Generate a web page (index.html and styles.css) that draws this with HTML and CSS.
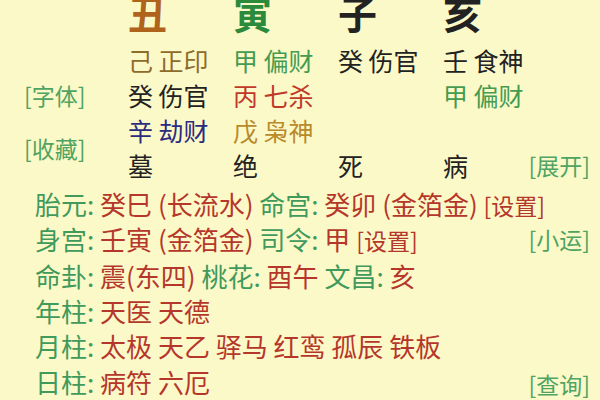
FILE: index.html
```html
<!DOCTYPE html>
<html lang="zh">
<head>
<meta charset="utf-8">
<link rel="stylesheet" href="styles.css">
</head>
<body>
<div class="page">
  <div class="chart">
    <div class="big c-brown col1 r1">丑</div>
    <div class="big c-green2 col2 r1">寅</div>
    <div class="big c-dark col3 r1">子</div>
    <div class="big c-dark col4 r1">亥</div>

    <div class="cell c-olive col1 r2">己 正印</div>
    <div class="cell c-green col2 r2">甲 偏财</div>
    <div class="cell c-dark col3 r2">癸 伤官</div>
    <div class="cell c-dark col4 r2">壬 食神</div>

    <div class="link side r3">[字体]</div>
    <div class="cell c-dark col1 r3">癸 伤官</div>
    <div class="cell c-red col2 r3">丙 七杀</div>
    <div class="cell c-green col4 r3">甲 偏财</div>

    <div class="cell c-navy col1 r4">辛 劫财</div>
    <div class="cell c-gold col2 r4">戊 枭神</div>
    <div class="link side r45">[收藏]</div>

    <div class="cell c-dark col1 r5">墓</div>
    <div class="cell c-dark col2 r5">绝</div>
    <div class="cell c-dark col3 r5">死</div>
    <div class="cell c-dark col4 r5">病</div>
    <div class="link right r5">[展开]</div>
  </div>

  <div class="info">
    <div class="row">
      <div class="line"><span class="k">胎元:</span> <span class="v">癸巳 (长流水)</span> <span class="k">命宫:</span> <span class="v">癸卯 (金箔金)</span> <span class="v btn">[设置]</span></div>
    </div>
    <div class="row">
      <div class="line"><span class="k">身宫:</span> <span class="v">壬寅 (金箔金)</span> <span class="k">司令:</span> <span class="v">甲</span> <span class="v btn">[设置]</span></div>
      <span class="link">[小运]</span>
    </div>
    <div class="row">
      <div class="line"><span class="k">命卦:</span> <span class="v">震(东四)</span> <span class="k">桃花:</span> <span class="v">酉午</span> <span class="k">文昌:</span> <span class="v">亥</span></div>
    </div>
    <div class="row">
      <div class="line"><span class="k">年柱:</span> <span class="v">天医 天德</span></div>
    </div>
    <div class="row">
      <div class="line"><span class="k">月柱:</span> <span class="v">太极 天乙 驿马 红鸾 孤辰 铁板</span></div>
    </div>
    <div class="row">
      <div class="line"><span class="k">日柱:</span> <span class="v">病符 六厄</span></div>
      <span class="link low">[查询]</span>
    </div>
  </div>
</div>
</body>
</html>
```

FILE: styles.css
```css
html, body {
  margin: 0;
  padding: 0;
  background: #fcf9c8;
}
body {
  width: 600px;
  height: 400px;
  overflow: hidden;
  font-family: "Noto Sans CJK SC", "Noto Sans", sans-serif;
  color: #222;
}
.page {
  margin-top: -13px;
}
.chart {
  display: grid;
  grid-template-columns: 128px 105px 105px 105px 105px 1fr;
  grid-template-rows: 56px 35px 35px 35px 35px;
  font-size: 25px;
}
.big {
  font-size: 39px;
  font-weight: bold;
  line-height: 50px;
  align-self: start;
}
.cell {
  line-height: 35px;
  white-space: nowrap;
}
.col1 { grid-column: 2; }
.col2 { grid-column: 3; }
.col3 { grid-column: 4; }
.col4 { grid-column: 5; }
.r1 { grid-row: 1; }
.r2 { grid-row: 2; }
.r3 { grid-row: 3; }
.r4 { grid-row: 4; }
.r5 { grid-row: 5; }
.r45 { grid-row: 4 / span 2; align-self: center; }

.link {
  color: #4fa463;
  font-size: 23px;
  line-height: 35px;
  white-space: nowrap;
}
.side {
  grid-column: 1;
  padding-left: 24px;
}
.right {
  grid-column: 5 / span 2;
  justify-self: end;
  padding-right: 10px;
}

.c-brown { color: #b0631c; }
.c-green2 { color: #2c8a3c; }
.c-dark { color: #222; }
.c-olive { color: #8d6b2b; }
.c-green { color: #449c50; }
.c-red { color: #c0392b; }
.c-navy { color: #2b2b80; }
.c-gold { color: #b98a2a; }

.info {
  margin-top: 4px;
  padding-left: 35px;
  padding-right: 10px;
  font-size: 26px;
}
.row {
  display: flex;
  justify-content: space-between;
  align-items: center;
  height: 35.3px;
  line-height: 35px;
  white-space: nowrap;
}
.k { color: #3f9a5c; }
.v { color: #b5372b; }
.btn { font-size: 23px; }
.low { align-self: flex-end; line-height: 30px; }
```
